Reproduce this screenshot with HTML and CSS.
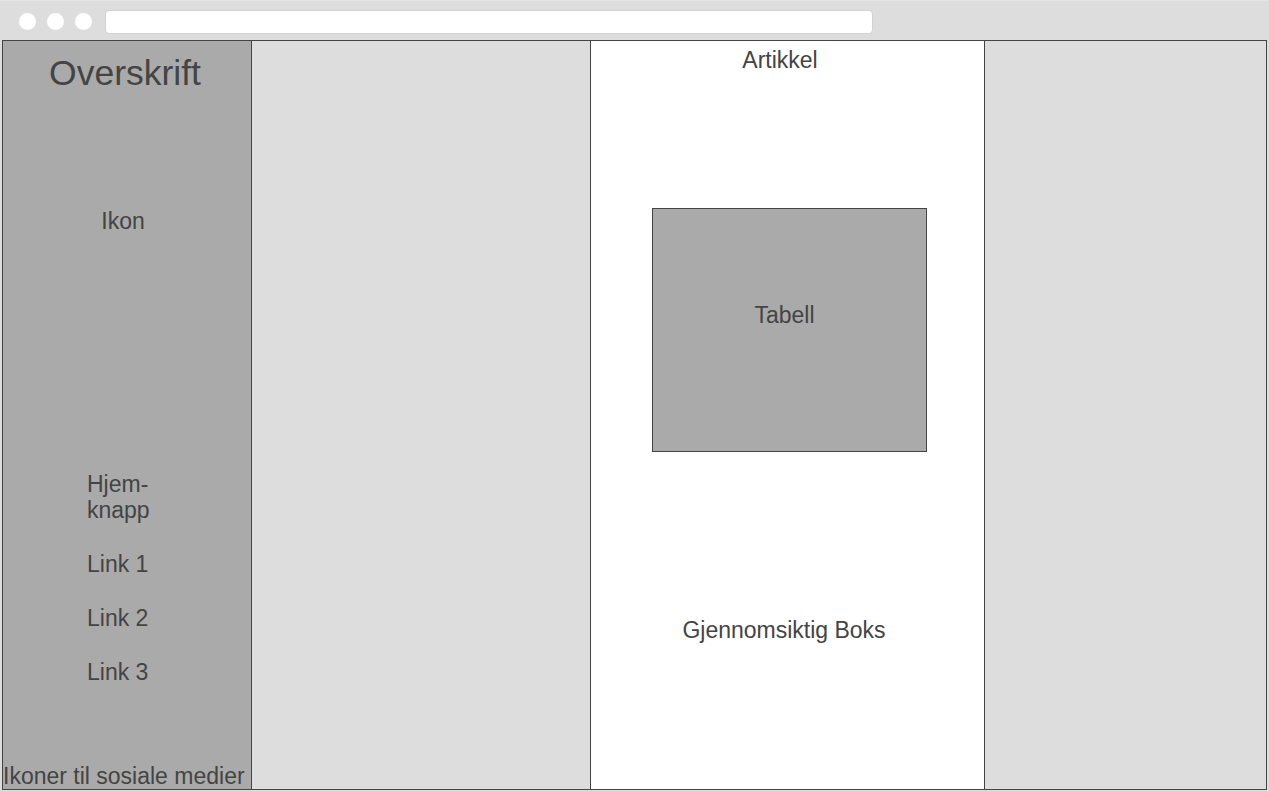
FILE: index.html
```html
<!DOCTYPE html>
<html lang="no">
<head>
<meta charset="utf-8">
<title>Wireframe</title>
<link rel="stylesheet" href="styles.css">
</head>
<body>
<div class="chrome">
  <div class="dots">
    <span class="dot"></span>
    <span class="dot"></span>
    <span class="dot"></span>
  </div>
  <div class="address"></div>
</div>
<div class="page">
  <aside class="sidebar">
    <h1 class="title">Overskrift</h1>
    <div class="icon">Ikon</div>
    <nav class="nav">
      <div class="nav-item">Hjem-<br>knapp</div>
      <div class="nav-item">Link 1</div>
      <div class="nav-item">Link 2</div>
      <div class="nav-item">Link 3</div>
    </nav>
    <div class="social">Ikoner til sosiale medier</div>
  </aside>
  <div class="spacer-left"></div>
  <main class="article">
    <div class="article-title">Artikkel</div>
    <div class="table-box">Tabell</div>
    <div class="transparent-box">Gjennomsiktig Boks</div>
  </main>
  <div class="spacer-right"></div>
</div>
</body>
</html>
```

FILE: styles.css
```css
* { box-sizing: border-box; }
html, body {
  margin: 0;
  padding: 0;
  background: #dddddd;
  font-family: "Liberation Sans", Arial, sans-serif;
  color: #444444;
  overflow: hidden;
}
.chrome {
  height: 40px;
  display: flex;
  align-items: flex-start;
  border-top: 1px solid #e6e6e6;
}
.dots {
  display: flex;
  gap: 11px;
  padding-left: 19px;
  padding-top: 12px;
}
.dot {
  width: 17px;
  height: 17px;
  border-radius: 50%;
  background: #ffffff;
}
.address {
  margin-left: 13px;
  margin-top: 9px;
  width: 768px;
  height: 24px;
  background: #ffffff;
  border-radius: 4px;
  border: 1px solid #d2d2d2;
}
.page {
  margin-left: 2px;
  width: 1265px;
  height: 750px;
  border: 1px solid #444444;
  display: flex;
}
.sidebar {
  width: 249px;
  flex: none;
  background: #aaaaaa;
  border-right: 1px solid #444444;
  display: flex;
  flex-direction: column;
  font-size: 23px;
  line-height: 26px;
}
.title {
  margin: 12px 0 0 0;
  font-size: 35.5px;
  line-height: 40px;
  font-weight: normal;
  text-align: center;
  padding-right: 4px;
}
.icon {
  margin-top: 115px;
  text-align: center;
  padding-right: 8px;
}
.nav {
  margin-top: 237px;
  padding-left: 84px;
  display: flex;
  flex-direction: column;
  gap: 28px;
}
.social {
  margin-top: auto;
  white-space: nowrap;
}
.spacer-left {
  width: 338px;
  flex: none;
}
.article {
  width: 395px;
  flex: none;
  background: #ffffff;
  border-left: 1px solid #444444;
  border-right: 1px solid #444444;
  font-size: 23px;
  line-height: 26px;
  display: flex;
  flex-direction: column;
}
.article-title {
  margin-top: 6px;
  text-align: center;
  padding-right: 15px;
}
.table-box {
  margin-top: 135px;
  margin-left: 61px;
  width: 275px;
  height: 244px;
  background: #aaaaaa;
  border: 1px solid #444444;
  text-align: center;
  padding-top: 93px;
  padding-right: 10px;
}
.transparent-box {
  margin-top: 165px;
  text-align: center;
  padding-right: 7px;
}
.spacer-right {
  flex: 1;
}
```
